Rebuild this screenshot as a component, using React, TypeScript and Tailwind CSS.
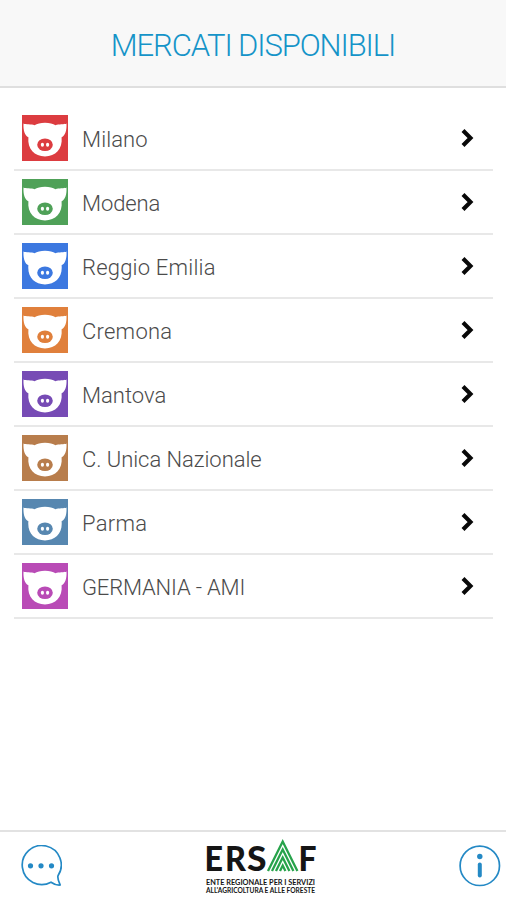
interface Market {
  id: string;
  name: string;
  color: string;
  tracking: string;
}

const markets: Market[] = [
  { id: 'mi', name: 'Milano', color: '#dc3c40', tracking: 'tracking-[0.1px]' },
  { id: 'mo', name: 'Modena', color: '#4fa158', tracking: 'tracking-[-0.1px]' },
  { id: 're', name: 'Reggio Emilia', color: '#3c78e0', tracking: 'tracking-[0.2px]' },
  { id: 'cr', name: 'Cremona', color: '#e0803c', tracking: 'tracking-[0.25px]' },
  { id: 'mn', name: 'Mantova', color: '#774bb5', tracking: 'tracking-[0px]' },
  { id: 'cun', name: 'C. Unica Nazionale', color: '#b87d4c', tracking: 'tracking-[-0.05px]' },
  { id: 'pr', name: 'Parma', color: '#5787b0', tracking: 'tracking-[0.3px]' },
  { id: 'ami', name: 'GERMANIA - AMI', color: '#b94bb6', tracking: 'tracking-[-0.18px]' },
];

function PigIcon({ color }: { color: string }) {
  return (
    <svg viewBox="0 0 46 46" className="w-[46px] h-[46px] shrink-0" aria-hidden="true">
      <rect width="46" height="46" fill={color} />
      <path
        fill="#fff"
        d="M1.500 8.500 C3.500 9.800 9.500 8.800 12.500 10.300 C15 8.600 18.500 7.700 23 7.700 C27.500 7.700 31 8.600 33.500 10.300 C36.500 8.800 42.500 9.800 44.500 8.500 C44.800 15 43.500 20.500 39.600 22.300 C40.800 34 33.500 41.400 23 41.400 C12.500 41.400 5.200 34 6.400 22.300 C2.500 20.500 1.200 15 1.500 8.500 Z"
      />
      <ellipse cx="23" cy="29.800" rx="7.800" ry="6.300" fill={color} />
      <ellipse cx="20.400" cy="29.800" rx="1.600" ry="2" fill="#fff" />
      <ellipse cx="25.600" cy="29.800" rx="1.600" ry="2" fill="#fff" />
    </svg>
  );
}

function ChevronIcon() {
  return (
    <svg viewBox="0 0 14 20" className="w-[14px] h-5" aria-hidden="true">
      <path d="M3 2.500 L10.500 10 L3 17.500" fill="none" stroke="#080808" strokeWidth="4.100" />
    </svg>
  );
}

function ChatIcon() {
  return (
    <svg viewBox="0 0 42 42" className="w-[42px] h-[42px]" fill="none" aria-hidden="true">
      <path
        d="M31 37.200 A19.500 19.500 0 1 1 38 30.800 C37.200 33.500 38.800 36.500 40.200 40 C37 40.300 34 39.300 31 37.200 Z"
        stroke="#2489c5"
        strokeWidth="1.700"
        strokeLinejoin="round"
      />
      <circle cx="10.500" cy="20.800" r="2.600" fill="#2489c5" />
      <circle cx="21" cy="20.800" r="2.600" fill="#2489c5" />
      <circle cx="31.500" cy="20.800" r="2.600" fill="#2489c5" />
    </svg>
  );
}

function InfoIcon() {
  return (
    <svg viewBox="0 0 42 42" className="w-[42px] h-[42px]" fill="none" aria-hidden="true">
      <circle cx="20.800" cy="20.800" r="19.700" stroke="#2489c5" strokeWidth="1.700" />
      <circle cx="20.800" cy="11.500" r="2.700" fill="#2489c5" />
      <path d="M20.800 19.500 V30.500" stroke="#2489c5" strokeWidth="4" strokeLinecap="round" />
    </svg>
  );
}

function ErsafLogo() {
  return (
    <svg viewBox="0 0 112 58" className="w-[112px] h-[58px] overflow-visible" role="img" aria-label="ERSAF">
      <g fill="#151515" fontFamily="Lato, sans-serif">
        <g fontSize="34" fontWeight="900">
          <text x="-0.500" y="33" textLength="18.500" lengthAdjust="spacingAndGlyphs">E</text>
          <text x="20" y="33" textLength="21" lengthAdjust="spacingAndGlyphs">R</text>
          <text x="42" y="33" textLength="19.500" lengthAdjust="spacingAndGlyphs">S</text>
          <text x="93.500" y="33" textLength="18" lengthAdjust="spacingAndGlyphs">F</text>
        </g>
        <g fontSize="7.800" fontWeight="700">
          <text x="1" y="46.500" textLength="109" lengthAdjust="spacingAndGlyphs">ENTE REGIONALE PER I SERVIZI</text>
          <text x="1" y="54.800" textLength="109" lengthAdjust="spacingAndGlyphs">{"ALL'AGRICOLTURA E ALLE FORESTE"}</text>
        </g>
      </g>
      <g fill="none" stroke="#27a34b" strokeWidth="2.300">
        <path d="M63 33 L77.700 3.500 L92.400 33" />
        <path d="M67 33 L77.700 11.500 L88.400 33" />
        <path d="M71 33 L77.700 19.500 L84.400 33" />
        <path d="M75 33 L77.700 27.500 L80.400 33" />
      </g>
    </svg>
  );
}

export default function App() {
  return (
    <div className="flex flex-col w-full h-[900px] bg-white font-[Roboto,sans-serif] overflow-hidden">
      <header className="h-[88px] shrink-0 flex justify-center items-center pt-[7px] bg-[#f8f8f8] border-b-2 border-[#dfdfdf]">
        <h1 className="text-[31px] font-light text-[#1594c8] tracking-[-1.1px] whitespace-nowrap">
          MERCATI DISPONIBILI
        </h1>
      </header>

      <main className="flex-1 px-[14px] pt-[19px]">
        <ul className="w-[479px]">
          {markets.map((market) => (
            <li
              key={market.id}
              className="h-16 flex items-center pl-2 pr-[19px] border-b-2 border-[#e8e8e8]"
            >
              <PigIcon color={market.color} />
              <span
                className={`flex-1 pl-[14px] pt-[3px] text-[22px] leading-7 font-light text-[#4b4b4b] whitespace-nowrap ${market.tracking}`}
              >
                {market.name}
              </span>
              <ChevronIcon />
            </li>
          ))}
        </ul>
      </main>

      <footer className="h-[70px] shrink-0 flex items-start justify-between border-t-2 border-[#e2e2e2] pl-5 pr-[5px] pt-[13px]">
        <button type="button" aria-label="Chat">
          <ChatIcon />
        </button>
        <div className="-mt-[7px] ml-[19px] mr-auto pl-[124px]">
          <ErsafLogo />
        </div>
        <button type="button" aria-label="Info">
          <InfoIcon />
        </button>
      </footer>
    </div>
  );
}
